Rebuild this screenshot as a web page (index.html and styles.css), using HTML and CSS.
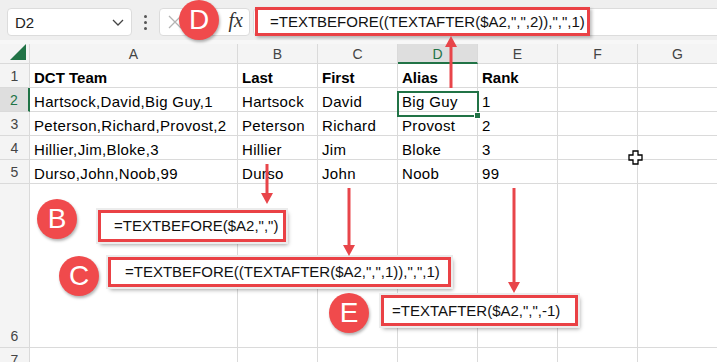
FILE: index.html
```html
<!DOCTYPE html>
<html lang="en">
<head>
  <meta charset="UTF-8" />
  <title>TEXTBEFORE / TEXTAFTER</title>
  <link rel="stylesheet" href="styles.css">
</head>
<body>
  <div class="stage">
    <div class="toolbar">
      <div class="namebox">
        <span>D2</span>
        <svg class="chevron" width="12" height="7" viewBox="0 0 12 7"><path d="M1 1 L6 6 L11 1" fill="none" stroke="#444" stroke-width="1.3"/></svg>
      </div>
      <div class="dots"><i></i><i></i><i></i></div>
      <div class="fxbox">
        <svg class="cancel" width="14" height="14" viewBox="0 0 14 14"><path d="M1 1 L13 13 M13 1 L1 13" stroke="#b3b3b3" stroke-width="1.3"/></svg>
        <span class="fx">fx</span>
      </div>
      <div class="formula">=TEXTBEFORE((TEXTAFTER($A2,",",2)),",",1)</div>
    </div>

    <div class="sheet">
      <div class="corner"><svg width="17" height="16" viewBox="0 0 17 16"><path d="M16 0 L16 16 L0 16 Z" fill="#217346"/></svg></div>
      <div class="hd">A</div><div class="hd">B</div><div class="hd">C</div>
      <div class="hd active">D</div><div class="hd">E</div><div class="hd">F</div><div class="hd">G</div>

      <div class="rh">1</div>
      <div class="c b">DCT Team</div><div class="c b">Last</div><div class="c b">First</div>
      <div class="c b">Alias</div><div class="c b">Rank</div><div class="c"></div><div class="c"></div>

      <div class="rh active">2</div>
      <div class="c">Hartsock,David,Big Guy,1</div><div class="c">Hartsock</div><div class="c">David</div>
      <div class="c">Big Guy</div><div class="c">1</div><div class="c"></div><div class="c"></div>

      <div class="rh">3</div>
      <div class="c">Peterson,Richard,Provost,2</div><div class="c">Peterson</div><div class="c">Richard</div>
      <div class="c">Provost</div><div class="c">2</div><div class="c"></div><div class="c"></div>

      <div class="rh">4</div>
      <div class="c">Hillier,Jim,Bloke,3</div><div class="c">Hillier</div><div class="c">Jim</div>
      <div class="c">Bloke</div><div class="c">3</div><div class="c"></div><div class="c"></div>

      <div class="rh">5</div>
      <div class="c">Durso,John,Noob,99</div><div class="c">Durso</div><div class="c">John</div>
      <div class="c">Noob</div><div class="c">99</div><div class="c"></div><div class="c"></div>

      <div class="rh">6</div>
      <div class="c"></div><div class="c"></div><div class="c"></div>
      <div class="c"></div><div class="c"></div><div class="c"></div><div class="c"></div>

      <div class="rh">7</div>
      <div class="c"></div><div class="c"></div><div class="c"></div>
      <div class="c"></div><div class="c"></div><div class="c"></div><div class="c"></div>
    </div>

    <!-- selection on D2 -->
    <div class="selection"><span class="handle"></span></div>

    <!-- annotations -->
    <div class="callout callout-d"></div>
    <div class="badge badge-d">D</div>

    <div class="badge badge-b">B</div>
    <div class="callout callout-b">=TEXTBEFORE($A2,",")</div>

    <div class="badge badge-c">C</div>
    <div class="callout callout-c">=TEXTBEFORE((TEXTAFTER($A2,",",1)),",",1)</div>

    <div class="badge badge-e">E</div>
    <div class="callout callout-e">=TEXTAFTER($A2,",",-1)</div>

    <svg class="arrows" width="717" height="362" viewBox="0 0 717 362">
      <g fill="#e8454a" stroke="#e8454a">
        <line x1="451" y1="88" x2="451" y2="46" stroke-width="3"/>
        <path d="M445 47 L451 36 L457 47 Z" stroke="none"/>
        <line x1="267" y1="164" x2="267" y2="194" stroke-width="3"/>
        <path d="M261 193 L267 204 L273 193 Z" stroke="none"/>
        <line x1="349" y1="188" x2="349" y2="246" stroke-width="3"/>
        <path d="M343 245 L349 256 L355 245 Z" stroke="none"/>
        <line x1="514" y1="188" x2="514" y2="283" stroke-width="3"/>
        <path d="M508 282 L514 293 L520 282 Z" stroke="none"/>
      </g>
    </svg>

    <svg class="cursor" width="15" height="15" viewBox="0 0 15 15">
      <path d="M5 1 H10 V5 H14 V10 H10 V14 H5 V10 H1 V5 H5 Z" fill="#fff" stroke="#000" stroke-width="1.3"/>
    </svg>
  </div>
</body>
</html>
```

FILE: styles.css
```css
body {
  margin: 0;
  overflow: hidden;
  background-color: #fff;
  font-family: 'Liberation Sans', Arial, sans-serif;
}

.stage {
  position: relative;
  width: 717px;
  height: 362px;
  overflow: hidden;
}

/* ---------- formula bar ---------- */

.toolbar {
  display: flex;
  align-items: flex-start;
  height: 44px;
  padding: 8px 0 0 7px;
  box-sizing: border-box;
  background-color: #efefef;
  border-bottom: 4px solid #f7f7f7;
}

.namebox {
  display: flex;
  align-items: center;
  justify-content: space-between;
  width: 125px;
  height: 28px;
  padding: 0 7px 0 7px;
  box-sizing: border-box;
  background: #fff;
  border: 1px solid #dcdcdc;
  border-radius: 4px;
  font-size: 15px;
  color: #222;
}

.dots {
  display: flex;
  flex-direction: column;
  gap: 3px;
  margin: 7px 0 0 12px;
}

.dots i {
  display: block;
  width: 3px;
  height: 3px;
  border-radius: 50%;
  background: #555;
}

.fxbox {
  display: flex;
  align-items: center;
  justify-content: space-between;
  width: 91px;
  height: 28px;
  margin-left: 12px;
  padding: 0 6px 0 8px;
  box-sizing: border-box;
  background: #fff;
  border: 1px solid #dcdcdc;
  border-radius: 4px;
}

.fx {
  font-family: 'Liberation Serif', 'Times New Roman', serif;
  font-style: italic;
  font-size: 20px;
  color: #333;
  margin-top: -3px;
}

.formula {
  flex: 1;
  height: 28px;
  margin: 0 -6px 0 3px;
  padding-left: 16px;
  box-sizing: border-box;
  background: #fff;
  border: 1px solid #dcdcdc;
  border-radius: 4px;
  font-size: 15px;
  line-height: 26px;
  color: #111;
}

/* ---------- grid ---------- */

.sheet {
  display: grid;
  grid-template-columns: 30px 208px repeat(6, 80px);
  grid-template-rows: 20px repeat(5, 24px) 164px 24px;
}

.sheet > div {
  box-sizing: border-box;
  border-right: 1px solid #dadada;
  border-bottom: 1px solid #dadada;
  overflow: hidden;
  white-space: nowrap;
}

.corner {
  display: flex;
  align-items: flex-end;
  padding: 0 0 3px 10px;
  background: #f4f4f4;
}

.hd {
  background: #f4f4f4;
  text-align: center;
  font-size: 14px;
  line-height: 20px;
  color: #444;
}

.hd.active {
  background: #dedede;
  color: #217346;
  border-bottom: 2px solid #217346 !important;
}

.rh {
  display: flex;
  align-items: flex-end;
  justify-content: center;
  padding-bottom: 3px;
  background: #f4f4f4;
  font-size: 14px;
  color: #444;
}

.rh.active {
  background: #dedede;
  color: #217346;
  border-right: 2px solid #217346 !important;
}

.c {
  padding: 2px 0 0 4px;
  font-size: 15px;
  line-height: 24px;
  letter-spacing: 0.35px;
  color: #000;
}

.c.b {
  font-weight: bold;
  letter-spacing: 0;
}

.selection {
  position: absolute;
  left: 397px;
  top: 91px;
  width: 82px;
  height: 26px;
  box-sizing: border-box;
  border: 2px solid #217346;
}

.handle {
  position: absolute;
  right: -4px;
  bottom: -4px;
  width: 5px;
  height: 5px;
  background: #217346;
  border: 1px solid #fff;
}

/* ---------- annotations ---------- */

.badge {
  position: absolute;
  width: 40px;
  height: 40px;
  border-radius: 50%;
  background: #f04a4c;
  color: #fff;
  font-size: 28px;
  line-height: 40px;
  text-align: center;
  box-shadow: 1px 2px 3px rgba(0, 0, 0, 0.3);
}

.badge-d { left: 179px; top: 0; }
.badge-b { left: 37px;  top: 199px; }
.badge-c { left: 59px;  top: 256px; }
.badge-e { left: 329px; top: 293px; }

.callout {
  position: absolute;
  box-sizing: border-box;
  border: 3px solid #ea4145;
  background: #fff;
  font-size: 15px;
  color: #111;
  white-space: nowrap;
  box-shadow: 0 0 0 2px #ececec, 2px 3px 4px rgba(0, 0, 0, 0.35);
}

.callout-d {
  left: 255px;
  top: 7px;
  width: 335px;
  height: 29px;
  background: transparent;
  box-shadow: 2px 2px 3px rgba(0, 0, 0, 0.25);
}

.callout-b {
  left: 98px;
  top: 210px;
  width: 188px;
  height: 32px;
  padding-left: 13px;
  line-height: 26px;
}

.callout-c {
  left: 108px;
  top: 257px;
  width: 343px;
  height: 30px;
  padding-left: 14px;
  line-height: 24px;
}

.callout-e {
  left: 381px;
  top: 295px;
  width: 197px;
  height: 31px;
  padding-left: 8px;
  line-height: 25px;
}

.arrows {
  position: absolute;
  left: 0;
  top: 0;
  pointer-events: none;
}

.cursor {
  position: absolute;
  left: 628px;
  top: 150px;
}
```
